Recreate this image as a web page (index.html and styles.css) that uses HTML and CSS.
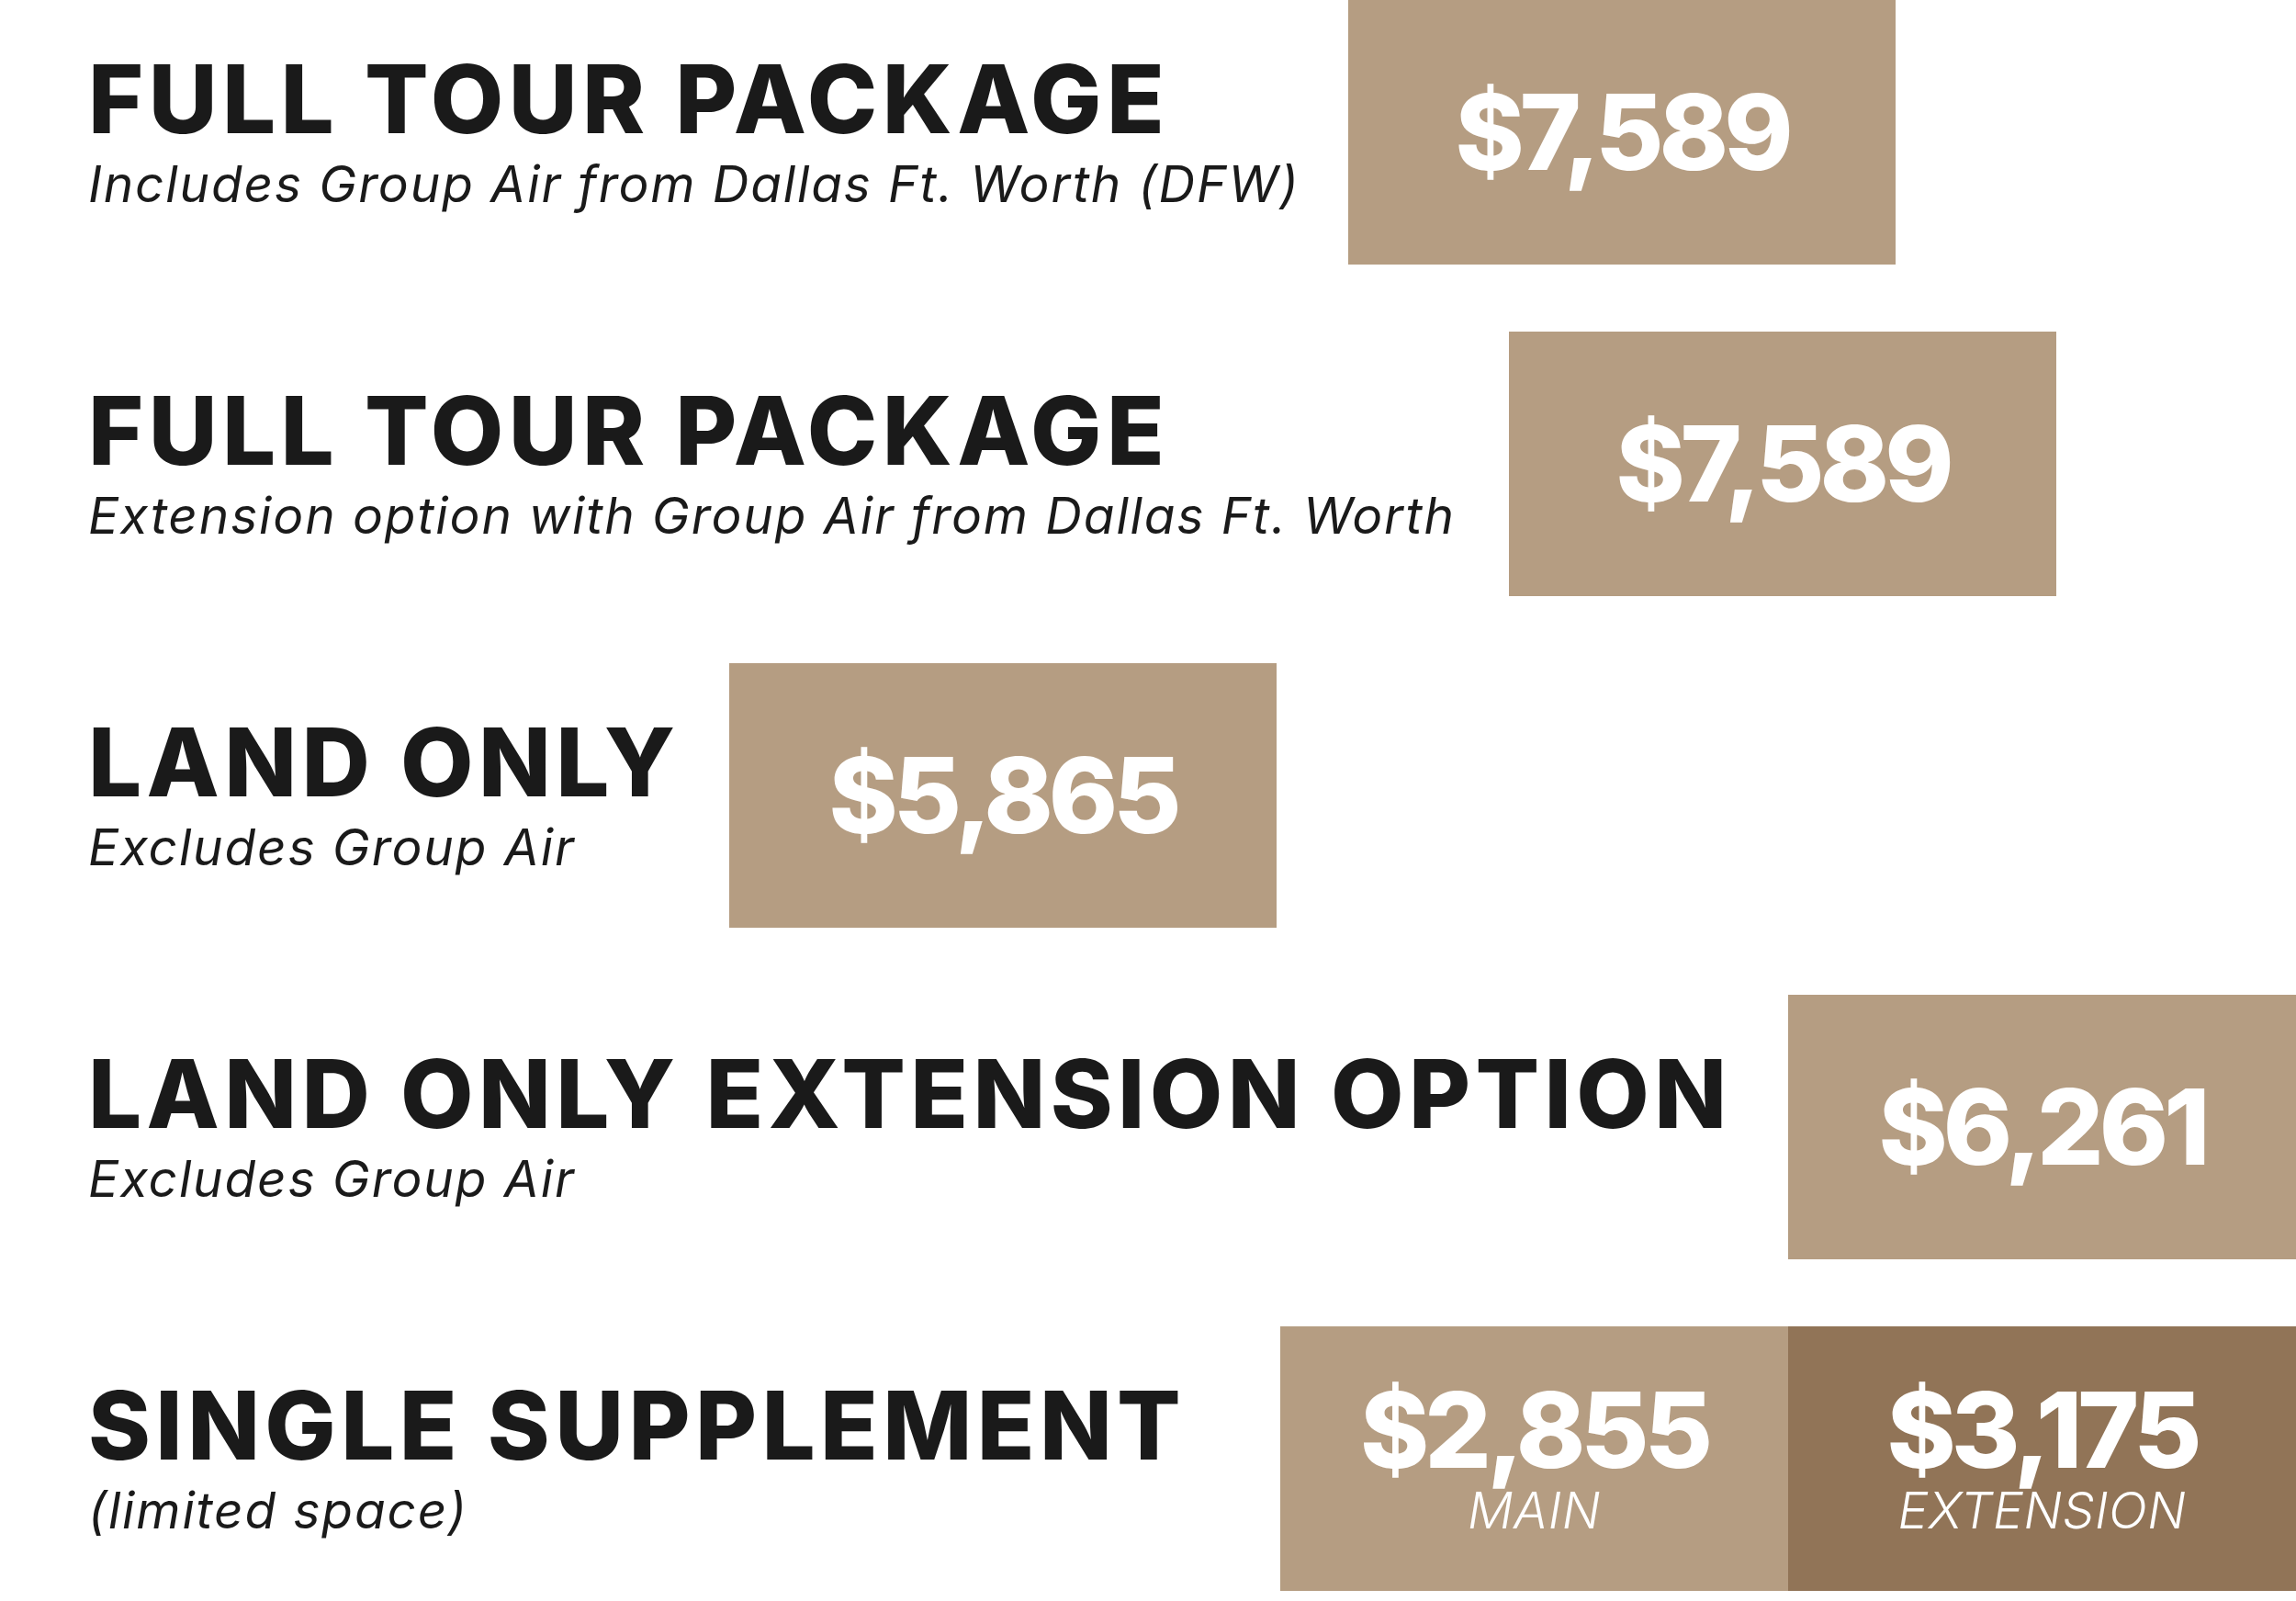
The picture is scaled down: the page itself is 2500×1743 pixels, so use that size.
FILE: index.html
```html
<!DOCTYPE html>
<html lang="en">
<head>
<meta charset="utf-8">
<title>Tour Pricing</title>
<link rel="stylesheet" href="styles.css">
</head>
<body>
<main class="pricing">
  <section class="row row--full-dfw">
    <div class="label">
      <h2 class="title">FULL TOUR PACKAGE</h2>
      <p class="note">Includes Group Air from Dallas Ft. Worth (DFW)</p>
    </div>
    <div class="price-box">
      <div class="cell"><span class="amount">$7,589</span></div>
    </div>
  </section>

  <section class="row row--full-ext">
    <div class="label">
      <h2 class="title">FULL TOUR PACKAGE</h2>
      <p class="note">Extension option with Group Air from Dallas Ft. Worth</p>
    </div>
    <div class="price-box">
      <div class="cell"><span class="amount">$7,589</span></div>
    </div>
  </section>

  <section class="row row--land">
    <div class="label">
      <h2 class="title">LAND ONLY</h2>
      <p class="note">Excludes Group Air</p>
    </div>
    <div class="price-box">
      <div class="cell"><span class="amount">$5,865</span></div>
    </div>
  </section>

  <section class="row row--land-ext">
    <div class="label">
      <h2 class="title">LAND ONLY EXTENSION OPTION</h2>
      <p class="note">Excludes Group Air</p>
    </div>
    <div class="price-box price-box--narrow">
      <div class="cell"><span class="amount">$6,261</span></div>
    </div>
  </section>

  <section class="row row--single">
    <div class="label">
      <h2 class="title">SINGLE SUPPLEMENT</h2>
      <p class="note">(limited space)</p>
    </div>
    <div class="price-box price-box--split">
      <div class="cell">
        <span class="amount">$2,855</span>
        <span class="tag">MAIN</span>
      </div>
      <div class="cell cell--dark">
        <span class="amount">$3,175</span>
        <span class="tag">EXTENSION</span>
      </div>
    </div>
  </section>
</main>
</body>
</html>
```

FILE: styles.css
```css
html, body {
  margin: 0;
  padding: 0;
  background: #ffffff;
}

body {
  width: 2500px;
  height: 1743px;
  overflow: hidden;
  font-family: Inter, "Liberation Sans", sans-serif;
  color: #1a1a1a;
}

.pricing {
  display: flex;
  flex-direction: column;
  gap: 73px;
}

.row {
  display: flex;
  align-items: center;
  height: 288px;
}

.label {
  flex: none;
  box-sizing: border-box;
  padding-left: 96px;
  display: flex;
  flex-direction: column;
}

.row--full-dfw .label { width: 1468px; }
.row--full-ext .label { width: 1643px; }
.row--land .label { width: 794px; }
.row--land-ext .label { width: 1947px; }
.row--single .label { width: 1394px; }

.title {
  margin: 0;
  font-size: 103px;
  font-weight: 800;
  line-height: 110px;
  letter-spacing: 0.052em;
  white-space: nowrap;
}

.note {
  margin: 2px 0 0;
  font-size: 55px;
  font-weight: 400;
  font-style: italic;
  line-height: 70px;
  letter-spacing: 0.034em;
  white-space: nowrap;
}

.price-box {
  flex: none;
  display: flex;
  height: 288px;
  width: 596px;
}

.price-box--narrow {
  width: 553px;
}

.price-box--split {
  width: 1106px;
}

.cell {
  flex: 1;
  display: flex;
  flex-direction: column;
  align-items: center;
  justify-content: center;
  background: #b59d82;
  color: #ffffff;
}

.cell--dark {
  background: #917457;
}

.amount {
  font-size: 114px;
  font-weight: 800;
  line-height: 120px;
  letter-spacing: -0.044em;
}

.cell .amount:not(:only-child) {
  line-height: 100px;
}

.tag {
  font-size: 55px;
  font-weight: 300;
  font-style: italic;
  line-height: 50px;
  margin-top: 12px;
  letter-spacing: 0.01em;
}
```
